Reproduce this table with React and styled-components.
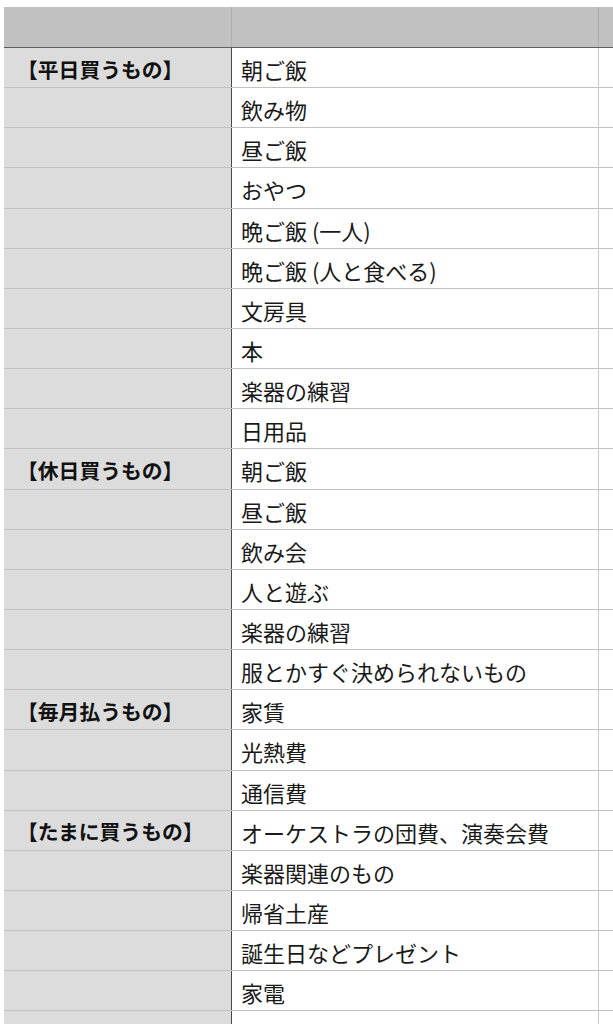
import React from "react";
import styled, { createGlobalStyle } from "styled-components";

const GlobalStyle = createGlobalStyle`
  html, body {
    margin: 0;
    padding: 0;
    background: #ffffff;
    overflow: hidden;
  }
  body {
    font-family: "Noto Sans CJK JP", "Noto Sans", sans-serif;
    color: #1a1a1a;
  }
`;

const rows = [
  { label: "【平日買うもの】", item: "朝ご飯" },
  { item: "飲み物" },
  { item: "昼ご飯" },
  { item: "おやつ" },
  { item: "晩ご飯 (一人)" },
  { item: "晩ご飯 (人と食べる)" },
  { item: "文房具" },
  { item: "本" },
  { item: "楽器の練習" },
  { item: "日用品" },
  { label: "【休日買うもの】", item: "朝ご飯" },
  { item: "昼ご飯" },
  { item: "飲み会" },
  { item: "人と遊ぶ" },
  { item: "楽器の練習" },
  { item: "服とかすぐ決められないもの" },
  { label: "【毎月払うもの】", item: "家賃" },
  { item: "光熱費" },
  { item: "通信費" },
  { label: "【たまに買うもの】", item: "オーケストラの団費、演奏会費" },
  { item: "楽器関連のもの" },
  { item: "帰省土産" },
  { item: "誕生日などプレゼント" },
  { item: "家電" },
  { item: "" },
];

export default function App() {
  return (
    <>
      <GlobalStyle />
      <Sheet>
        <HeaderRow>
          <HeaderCell />
          <HeaderCell />
          <HeaderCell $last />
        </HeaderRow>
        {rows.map((row, i) => (
          <Row key={i}>
            <LabelCell>{row.label}</LabelCell>
            <ItemCell>{row.item}</ItemCell>
            <SpareCell />
          </Row>
        ))}
      </Sheet>
    </>
  );
}

const Sheet = styled.div`
  display: flex;
  flex-direction: column;
  padding-top: 7px;
  padding-left: 4px;
`;

const HeaderRow = styled.div`
  display: grid;
  grid-template-columns: 228px 367px 1fr;
  height: 40px;
  border-bottom: 1px solid #5e5e5e;
  background-color: #c0c1c0;
`;

const HeaderCell = styled.div`
  border-right: ${(p) => (p.$last ? "none" : "1px solid #acadac")};
`;

const Row = styled.div`
  display: grid;
  grid-template-columns: 228px 367px 1fr;
  height: 40.15px;
  box-sizing: border-box;
  border-bottom: 1px solid #c2c2c2;
  flex-shrink: 0;
`;

const LabelCell = styled.div`
  display: flex;
  align-items: center;
  padding-left: 13px;
  padding-top: 2px;
  background-color: #dcdcdc;
  border-right: 1px solid #4a4a4a;
  font-size: 20.8px;
  font-weight: 700;
  color: #111;
  white-space: nowrap;
`;

const ItemCell = styled.div`
  display: flex;
  align-items: center;
  padding-left: 9px;
  padding-top: 3px;
  border-right: 1px solid #c8c8c8;
  font-size: 22px;
  color: #1a1a1a;
  white-space: nowrap;
`;

const SpareCell = styled.div`
  background-color: #ffffff;
`;
